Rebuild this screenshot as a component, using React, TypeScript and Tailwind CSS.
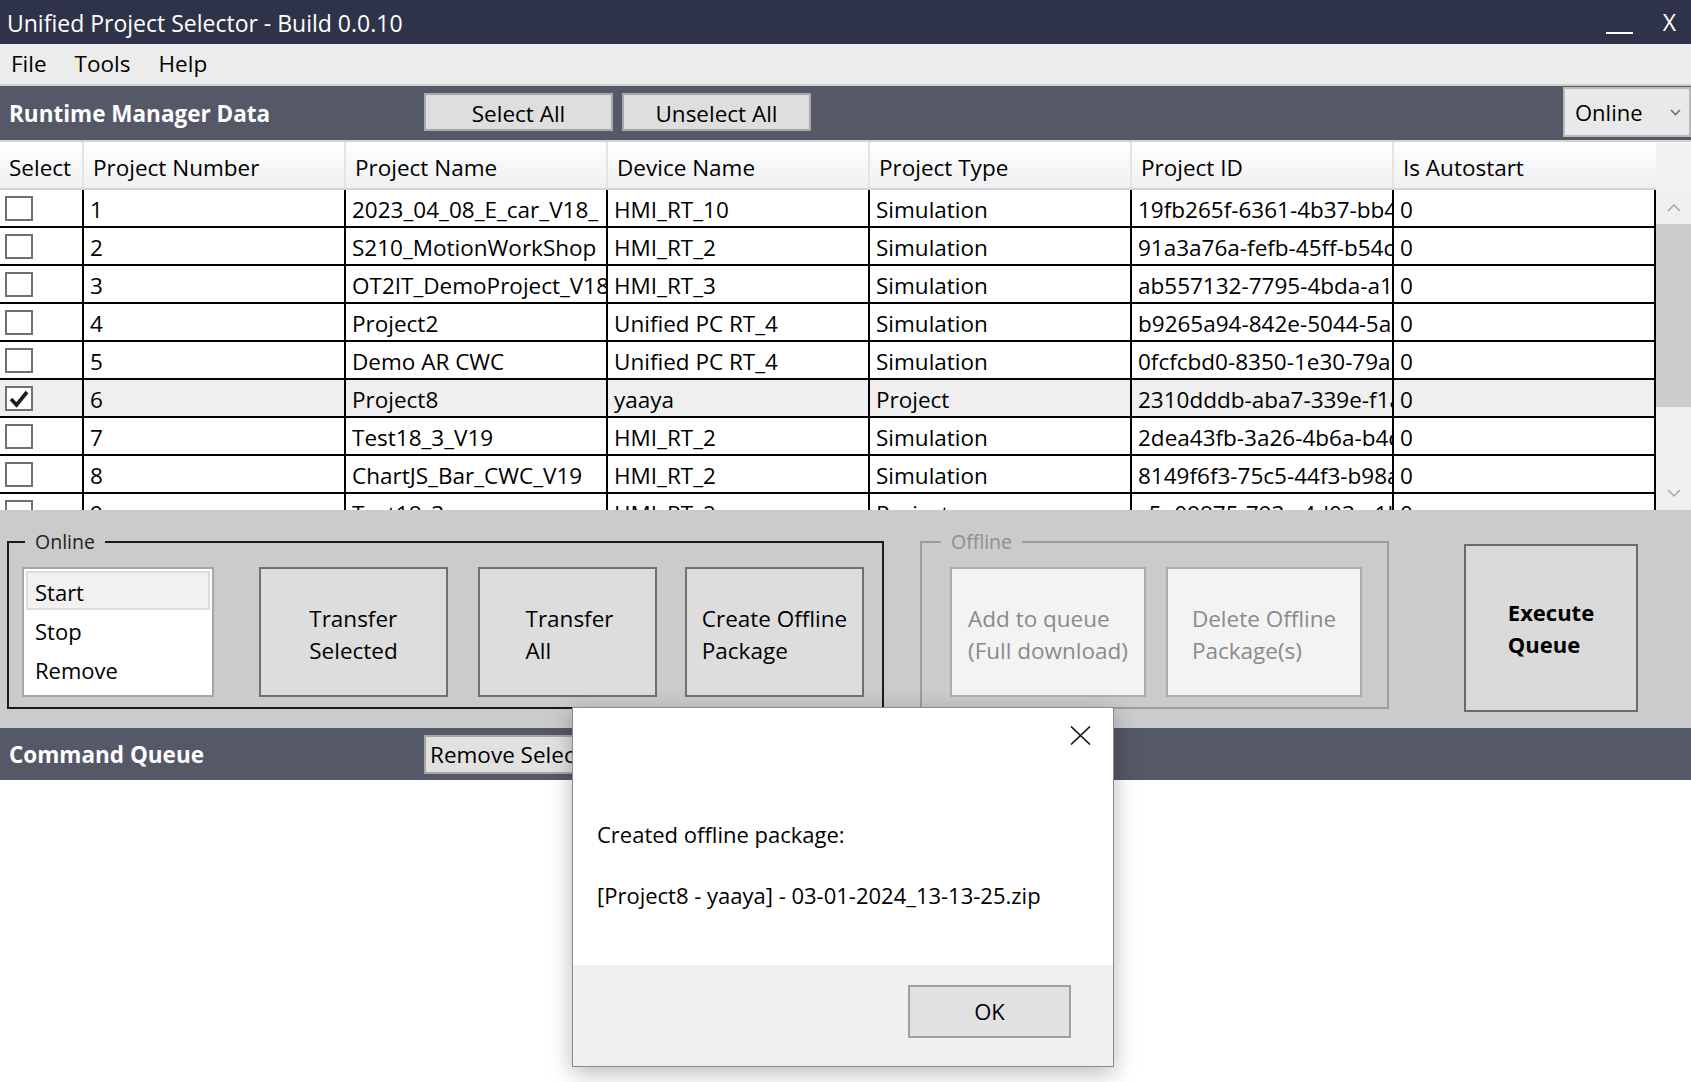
import React from "react";

const rows: { c: string[]; checked?: boolean }[] = [
  { c: ["1", "2023_04_08_E_car_V18_", "HMI_RT_10", "Simulation", "19fb265f-6361-4b37-bb4c-1a2b3c4d5e6f", "0"] },
  { c: ["2", "S210_MotionWorkShop", "HMI_RT_2", "Simulation", "91a3a76a-fefb-45ff-b54c-7d8e9f0a1b2c", "0"] },
  { c: ["3", "OT2IT_DemoProject_V18", "HMI_RT_3", "Simulation", "ab557132-7795-4bda-a1b2-c3d4e5f6a7b8", "0"] },
  { c: ["4", "Project2", "Unified PC RT_4", "Simulation", "b9265a94-842e-5044-5a6b-7c8d9e0f1a2b", "0"] },
  { c: ["5", "Demo AR CWC", "Unified PC RT_4", "Simulation", "0fcfcbd0-8350-1e30-79ab-cdef01234567", "0"] },
  { c: ["6", "Project8", "yaaya", "Project", "2310dddb-aba7-339e-f1a2-b3c4d5e6f7a8", "0"], checked: true },
  { c: ["7", "Test18_3_V19", "HMI_RT_2", "Simulation", "2dea43fb-3a26-4b6a-b4c5-d6e7f8a9b0c1", "0"] },
  { c: ["8", "ChartJS_Bar_CWC_V19", "HMI_RT_2", "Simulation", "8149f6f3-75c5-44f3-b98a-0b1c2d3e4f5a", "0"] },
  { c: ["9", "Test18_3", "HMI_RT_2", "Project", "c5e09875-793c-4d03-a1b2-c3d4e5f6a7b8", "0"] },
];

const headers = ["Select", "Project Number", "Project Name", "Device Name", "Project Type", "Project ID", "Is Autostart"];

function Checkbox({ checked }: { checked?: boolean }) {
  return (
    <div className="w-[28px] h-[25px] border-2 border-[#707070] bg-white flex items-center justify-center">
      {checked && (
        <svg width="24" height="21" viewBox="0 0 24 21">
          <path d="M4 11 L9.5 17 L20 4" fill="none" stroke="#1e1e1e" strokeWidth="3.6" strokeLinecap="butt" strokeLinejoin="miter" />
        </svg>
      )}
    </div>
  );
}

function Chevron({ up }: { up?: boolean }) {
  return (
    <svg width="14" height="9" viewBox="0 0 14 9">
      <path d={up ? "M1 8 L7 2 L13 8" : "M1 1 L7 7 L13 1"} fill="none" stroke="#a6a6a6" strokeWidth="1.5" />
    </svg>
  );
}

export default function App() {
  return (
    <div className="relative w-[1691px] h-[1082px] overflow-hidden bg-white text-black font-['Open_Sans','Noto_Sans',sans-serif]">
      {/* Title bar */}
      <div className="h-[44px] bg-[#2f3349] flex items-center text-white">
        <div className="pl-[7px] pt-[2px] text-[23px] leading-none">Unified Project Selector - Build 0.0.10</div>
        <div className="flex-1" />
        <div className="w-[27px] h-[2px] bg-white mt-[22px] mr-[30px]" />
        <div className="text-[23px] leading-none mr-[15px]">X</div>
      </div>

      {/* Menu bar */}
      <div className="h-[42px] bg-[#ececec] border-b-2 border-[#cfcfcf] flex items-center pl-[11px] gap-[28px] text-[22.5px]">
        <span>File</span>
        <span>Tools</span>
        <span>Help</span>
      </div>

      {/* Runtime Manager Data bar */}
      <div className="h-[54px] bg-[#555867] flex items-start">
        <div className="w-[424px] pl-[9px] pt-[2px] h-[54px] flex items-center text-white font-bold text-[22.5px]">Runtime Manager Data</div>
        <button className="mt-[7px] w-[189px] h-[38px] bg-[#dedede] border-2 border-[#a9a9a9] text-[22.5px] pt-[3px] flex items-center justify-center">Select All</button>
        <button className="mt-[7px] ml-[9px] w-[189px] h-[38px] bg-[#dedede] border-2 border-[#a9a9a9] text-[22.5px] pt-[3px] flex items-center justify-center">Unselect All</button>
        <div className="flex-1" />
        <div className="mt-[1px] w-[128px] h-[50px] bg-[#e9e9e9] border-2 border-[#b9b9b9] flex items-center pl-[10px] pr-[8px] text-[22px]">
          <span className="flex-1">Online</span>
          <svg width="11" height="7" viewBox="0 0 11 7">
            <path d="M1 1 L5.5 5.5 L10 1" fill="none" stroke="#6e6e6e" strokeWidth="1.6" />
          </svg>
        </div>
      </div>

      {/* Table section */}
      <div className="h-[370px] border-t-2 border-[#d3d3d3] flex">
        <div className="w-[1656px] flex flex-col">
          <div className="grid grid-cols-[84px_repeat(6,262px)] h-[48px] border-b-2 border-[#d5d5d5] bg-gradient-to-b from-white to-[#eff0f2]">
            {headers.map((h, i) => (
              <div key={i} className={`h-[46px] flex items-center pl-[9px] pt-[5px] text-[22.5px] whitespace-nowrap overflow-hidden ${i === 6 ? "" : "border-r-2 border-[#e4e4e4]"}`}>
                {h}
              </div>
            ))}
          </div>
          <div className="flex-1 overflow-hidden">
            {rows.map((r, ri) => (
              <div key={ri} className={`grid grid-cols-[84px_repeat(6,262px)] h-[38px] ${r.checked ? "bg-[#efefef]" : "bg-white"}`}>
                <div className="h-[38px] border-r-2 border-b-2 border-black flex items-center pl-[5px]">
                  <Checkbox checked={r.checked} />
                </div>
                {r.c.map((v, ci) => (
                  <div key={ci} className="h-[38px] border-r-2 border-b-2 border-black flex items-center pl-[6px] pt-[3px] text-[22.5px] whitespace-nowrap overflow-hidden">
                    {v}
                  </div>
                ))}
              </div>
            ))}
          </div>
        </div>
        {/* Scrollbar */}
        <div className="flex-1 flex flex-col bg-[#f0f0f0]">
          <div className="h-[48px] bg-[#f2f2f2]" />
          <div className="h-[34px] flex items-center justify-center"><Chevron up /></div>
          <div className="h-[183px] bg-[#cdcdcd]" />
          <div className="flex-1" />
          <div className="h-[34px] flex items-center justify-center"><Chevron /></div>
        </div>
      </div>

      {/* Bottom panel */}
      <div className="h-[218px] bg-[#cbcbcb] flex items-start pl-[7px] pt-[20px]">
        <fieldset className="border-2 border-[#1a1a1a] pl-[13px] pr-[18px] pt-[13px] pb-[10px]">
          <legend className="ml-[3px] px-[10px] text-[19.5px] leading-[24px] text-[#222]">Online</legend>
          <div className="flex">
            <div className="w-[192px] h-[130px] bg-white border-2 border-[#a6a6a6] p-[2px] flex flex-col text-[22px]">
              <div className="h-[39px] bg-[#f1f1f1] border-2 border-[#dcdcdc] flex items-center pl-[7px] pt-[3px]">Start</div>
              <div className="h-[39px] flex items-center pl-[9px] pt-[3px]">Stop</div>
              <div className="h-[39px] flex items-center pl-[9px] pt-[3px]">Remove</div>
            </div>
            <button className="ml-[45px] w-[189px] h-[130px] bg-[#dddddd] border-2 border-[#707070] flex items-center justify-center pt-[6px] text-[22.5px] leading-[32px]">
              <div className="text-left">Transfer<br />Selected</div>
            </button>
            <button className="ml-[30px] w-[179px] h-[130px] bg-[#dddddd] border-2 border-[#707070] flex items-center justify-center pt-[6px] text-[22.5px] leading-[32px]">
              <div className="text-left w-[84px]">Transfer<br />All</div>
            </button>
            <button className="ml-[28px] w-[179px] h-[130px] bg-[#dddddd] border-2 border-[#707070] flex items-center justify-center pt-[6px] text-[22.5px] leading-[32px]">
              <div className="text-left">Create Offline<br />Package</div>
            </button>
          </div>
        </fieldset>

        <fieldset className="ml-[36px] border-2 border-[#9c9c9c] pl-[28px] pr-[25px] pt-[13px] pb-[10px]">
          <legend className="ml-[-9px] px-[10px] text-[19.5px] leading-[24px] text-[#8f8f8f]">Offline</legend>
          <div className="flex">
            <button className="w-[196px] h-[130px] bg-[#f3f3f3] border-2 border-[#adadad] flex items-center justify-center pt-[6px] text-[22.5px] leading-[32px] text-[#8a8a8a]">
              <div className="text-left">Add to queue<br />(Full download)</div>
            </button>
            <button className="ml-[20px] w-[196px] h-[130px] bg-[#f3f3f3] border-2 border-[#adadad] flex items-center justify-center pt-[6px] text-[22.5px] leading-[32px] text-[#8a8a8a]">
              <div className="text-left">Delete Offline<br />Package(s)</div>
            </button>
          </div>
        </fieldset>

        <button className="ml-[75px] mt-[14px] w-[174px] h-[168px] bg-[#dadada] border-2 border-[#6b6b6b] flex items-center justify-center text-[22px] leading-[32px] font-bold">
          <div className="text-left">Execute<br />Queue</div>
        </button>
      </div>

      {/* Command Queue bar */}
      <div className="h-[52px] bg-[#555867] flex items-center">
        <div className="w-[424px] pl-[9px] pt-[2px] text-white font-bold text-[22.5px]">Command Queue</div>
        <button className="w-[189px] h-[39px] bg-[#e1e1e1] border-2 border-[#a6a6a6] flex items-center pl-[4px] pt-[2px] text-[22.5px] whitespace-nowrap overflow-hidden">Remove Selected</button>
      </div>

      {/* Dialog */}
      <div className="absolute left-[572px] top-[707px] w-[542px] h-[360px] border border-[#8a8a8a] bg-white shadow-[0_6px_22px_rgba(0,0,0,0.28)] flex flex-col">
        <div className="h-[257px] flex flex-col">
          <div className="h-[54px] flex items-center justify-end pr-[22px]">
            <svg width="21" height="19" viewBox="0 0 21 19">
              <path d="M1 0.5 L20 18.5 M20 0.5 L1 18.5" stroke="#111" strokeWidth="1.6" fill="none" />
            </svg>
          </div>
          <div className="pl-[24px] mt-[57px] text-[22px] leading-[30px]">Created offline package:</div>
          <div className="pl-[24px] mt-[31px] text-[22px] leading-[30px]">[Project8 - yaaya] - 03-01-2024_13-13-25.zip</div>
        </div>
        <div className="flex-1 bg-[#f0f0f0] flex justify-end items-start pt-[20px] pr-[42px]">
          <button className="w-[163px] h-[53px] bg-[#e1e1e1] border-2 border-[#a0a0a0] flex items-center justify-center text-[22px]">OK</button>
        </div>
      </div>
    </div>
  );
}
